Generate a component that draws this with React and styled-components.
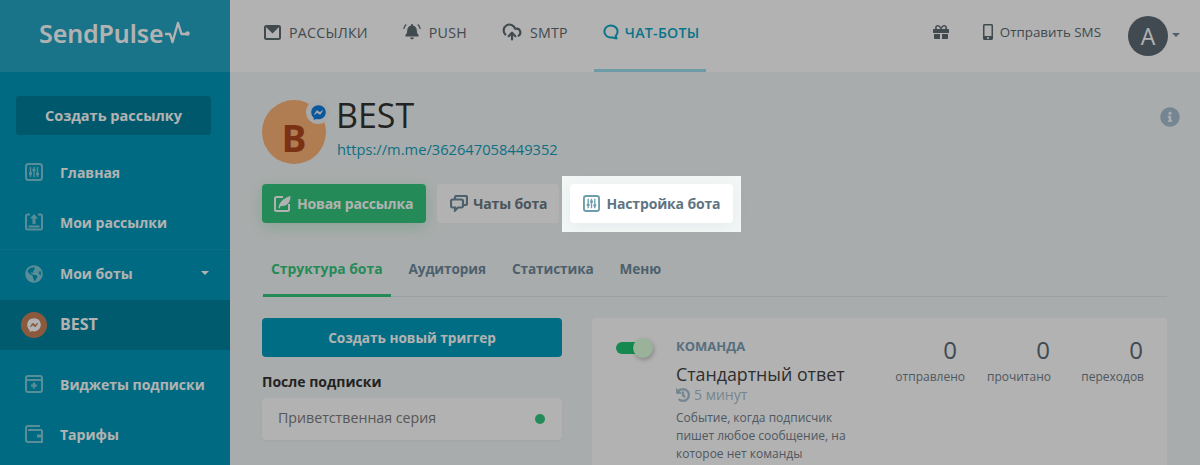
import React from 'react';
import styled, { createGlobalStyle } from 'styled-components';
import { FaGift, FaMobileAlt, FaInfoCircle, FaHistory, FaFacebookMessenger, FaGlobeAmericas } from 'react-icons/fa';
import { LuCloudUpload } from 'react-icons/lu';

const Global = createGlobalStyle`
  html, body { margin: 0; padding: 0; height: 465px; overflow: hidden; background: #f3f7f6; }
  body { font-family: "Open Sans", "Noto Sans", sans-serif; color: #333; }
  * { box-sizing: border-box; }
`;

const Page = styled.div`display: flex; width: 1200px; height: 465px; overflow: hidden;`;
const Overlay = styled.div`position: fixed; inset: 0; background: rgba(0,0,0,.3); z-index: 5;`;

const Sidebar = styled.aside`width: 230px; flex: none; background: #0099ba; color: #fff;`;
const LogoBar = styled.div`height: 72px; background: #25a6c4; display: flex; align-items: center; padding: 0 0 6px 39px; gap: 2px;`;
const LogoText = styled.span`font: 600 25px/1 "Noto Sans", sans-serif; letter-spacing: -.1px; color: #fff;`;
const CreateBtn = styled.button`display: block; width: 195px; height: 39px; margin: 24px 0 0 16px; background: #007f9b; border: 0; border-radius: 3px; color: #fff; font: 700 14.5px "Open Sans", sans-serif;`;
const Nav = styled.nav`margin-top: 13px; display: flex; flex-direction: column;`;
const NavItem = styled.div`
  height: ${p => p.$line ? '51px' : '50px'}; display: flex; align-items: center; gap: 17px; padding-left: ${p => p.$avatar ? '21px' : '25px'};
  font-weight: 700; font-size: 14px; position: relative;
  background: ${p => p.$active ? '#0083a0' : 'transparent'};
  border-top: ${p => p.$line ? '1px solid rgba(255,255,255,.06)' : '0'};
  padding-bottom: ${p => p.$avatar ? '0' : p.$line ? '3px' : '2px'};
  margin-top: ${p => p.$line ? 1 : p.$gap || 0}px;
  & > svg { flex: none; opacity: .5; }
`;
const NavLabel = styled.span``;
const BestLabel = styled.span`margin: -2px 0 0 -4px; font-size: 16px;`;
const Caret = styled.span`
  position: absolute; right: 21px; top: 21px; width: 0; height: 0;
  border-left: 4px solid transparent; border-right: 4px solid transparent; border-top: 4px solid #fff;
`;
const BotAvatar = styled.div`width: 26px; height: 26px; border-radius: 50%; background: #c8815a; color: #fff; flex: none; display: flex; align-items: center; justify-content: center;`;

const Main = styled.div`flex: 1; min-width: 0; display: flex; flex-direction: column;`;
const Top = styled.header`height: 72px; flex: none; background: #fff; display: flex; align-items: stretch; padding: 0 20px 0 34px;`;
const TopNav = styled.nav`display: flex; gap: 35px; flex: 1;`;
const TopLink = styled.a`
  display: flex; align-items: center; gap: ${p => p.$active ? 6 : 8}px; height: 72px; padding-bottom: 8px; position: relative;
  font-size: 14.2px; font-weight: 500; letter-spacing: .25px; color: ${p => p.$active ? '#0ea8c6' : '#5d6a72'};
  svg { flex: none; }
  ${p => p.$active && `
    font-weight: 600;
    &::after { content: ''; position: absolute; left: -9px; right: -7px; bottom: 0; height: 3px; background: #9ee0ee; }
  `}
`;
const TopRight = styled.div`display: flex; align-items: center; padding-bottom: 8px;`;
const Sms = styled.span`display: flex; align-items: center; gap: 4px; margin-left: 31px; font-size: 13.4px; color: #5d6a72;`;
const UserCircle = styled.div`width: 40px; height: 40px; border-radius: 50%; background: #5d6b74; color: #fff; display: flex; align-items: center; justify-content: center; font-size: 23px; margin-left: 27px; position: relative; top: 4px;`;
const UserCaret = styled.span`width: 0; height: 0; margin: 6px 0 0 4px; border-left: 4px solid transparent; border-right: 4px solid transparent; border-top: 4px solid #6f8a99;`;

const Content = styled.main`flex: 1; padding: 28px 33px 0 32px; min-height: 0;`;
const Profile = styled.div`display: flex; gap: 11px; height: 64px;`;
const AvatarWrap = styled.div`position: relative; width: 64px; height: 64px; flex: none;`;
const Avatar = styled.div`width: 64px; height: 64px; border-radius: 50%; background: #fdb274; color: #b0471c; display: flex; align-items: center; justify-content: center; font: 700 37px "Noto Sans", sans-serif; padding-top: 10px;`;
const Badge = styled.div`position: absolute; left: 44px; top: 0; width: 24px; height: 24px; border-radius: 50%; background: #eef1f4; display: flex; align-items: center; justify-content: center; color: #0d7de0;`;
const ProfileText = styled.div`flex: 1;`;
const Title = styled.h1`margin: -1px 0 0 -1px; font: 400 34px/32px "Open Sans", sans-serif; color: #333; height: 35px;`;
const Link = styled.a`display: block; margin-top: 5px; font-size: 14.7px; line-height: 20px; color: #12a0bd;`;
const Info = styled.div`color: #a6c0d3; margin: 7px -13px 0 0; line-height: 0;`;
const Buttons = styled.div`display: flex; gap: 11px; margin-top: 20px; height: 39px;`;
const Btn = styled.button`
  height: 39px; padding: 0 ${p => p.$pr || 13}px 0 ${p => p.$pl || 13}px; border: 0; border-radius: 4px; display: flex; align-items: center; gap: ${p => p.$gap || 6}px;
  font: 700 14px "Open Sans", sans-serif; letter-spacing: -.15px;
  background: ${p => p.$bg}; color: ${p => p.$color};
  ${p => p.$shadow && `box-shadow: 0 4px 16px ${p.$shadow};`}
  svg { flex: none; }
`;
const HaloWrap = styled.div`
  position: relative; z-index: 6; background: #f3f7f6; padding: 8px; margin: -8px; display: flex; height: 56px;
`;
const Tabs = styled.div`display: flex; gap: 10px; margin-top: 26px; height: 48px; padding: 0 9px 0 1px; border-bottom: 1px solid #dfe5e8;`;
const Tab = styled.div`
  padding: 10px 8px 0; height: 48px; font-weight: 700;
  font-size: ${p => p.$active ? '13.9px' : '13.6px'};
  letter-spacing: ${p => p.$active ? '0' : '-.1px'};
  color: ${p => p.$active ? '#34c77e' : '#6f8a9c'};
  ${p => p.$active && 'border-bottom: 3px solid #34c77e;'}
`;
const Columns = styled.div`display: grid; grid-template-columns: 300px 575px; gap: 30px; margin-top: 21px;`;
const LeftCol = styled.div``;
const Primary = styled.button`width: 100%; height: 39px; background: #009dbd; border: 0; border-radius: 4px; color: #fff; font: 700 13.6px "Open Sans", sans-serif;`;
const GroupLabel = styled.div`margin-top: 15px; font-size: 14px; font-weight: 700; line-height: 19px; color: #333;`;
const Row = styled.div`margin-top: 7px; height: 42px; background: #fff; border-radius: 4px; display: flex; align-items: center; justify-content: space-between; padding: 0 17px 4px 16px; font-size: 14.2px; color: #7d7d7d; box-shadow: 0 1px 3px rgba(0,0,0,.05);`;
const Dot = styled.span`width: 10px; height: 10px; border-radius: 50%; background: #34c77e; margin-top: 4px;`;
const GroupNext = styled.div`margin-top: 20px; font-size: 14px; font-weight: 700; color: #333;`;

const Card = styled.section`background: #fff; border-radius: 4px 4px 0 0; height: 160px; display: flex; padding: 20px 23px 0 24px;`;
const Toggle = styled.div`position: relative; width: 37px; height: 20px; flex: none;`;
const Track = styled.div`position: absolute; left: 0; top: 4px; width: 30px; height: 12px; border-radius: 6px; background: #20c475;`;
const Knob = styled.div`position: absolute; right: 0; top: 0; width: 20px; height: 20px; border-radius: 50%; background: #dcffdc; box-shadow: 1px 2px 4px rgba(0,0,0,.25);`;
const CardBody = styled.div`width: 190px; margin-left: 23px; flex: none;`;
const Kind = styled.div`font-size: 13px; font-weight: 700; line-height: 16px; color: #7da0b5;`;
const CardTitle = styled.div`margin-top: 9px; font-size: 17.8px; line-height: 22px; color: #444;`;
const Time = styled.div`display: flex; align-items: center; gap: 4px; margin-top: 1px; font-size: 14px; line-height: 18px; color: #a7bfce; svg { stroke: currentColor; stroke-width: 24px; }`;
const Desc = styled.div`margin-top: 5px; font-size: 12px; line-height: 18px; color: #72808a; width: 190px; white-space: nowrap;`;
const Stats = styled.div`margin-left: auto; display: flex; gap: 30px;`;
const Stat = styled.div`width: 63px; display: flex; flex-direction: column; align-items: flex-end; margin-top: -3px;`;
const StatNum = styled.div`padding-right: 1px; font-size: 24px; line-height: 30px; color: #5d6b74;`;
const StatLabel = styled.div`margin: 3px ${p => p.$over || 0}px 0 0; font-size: 12px; line-height: 18px; color: #72808a; white-space: nowrap;`;

const Sliders = ({ size = 18, color = 'currentColor' }) => (
  <svg width={size} height={size} viewBox="0 0 18 18" fill="none">
    <rect x="1" y="1" width="16" height="16" rx="2.500" stroke={color} strokeWidth="2" />
    <path d="M5.500 4v10M9 4v10M12.500 4v10" stroke={color} strokeWidth="1.400" />
    <path d="M4 10.500h3M7.500 7h3M11 11h3" stroke={color} strokeWidth="2.400" />
  </svg>
);
const Upload = () => (
  <svg width="18" height="18" viewBox="0 0 18 18" fill="none">
    <path d="M5 1.500H2.500a1.500 1.500 0 0 0-1.500 1.500v12a1.500 1.500 0 0 0 1.500 1.500h13a1.500 1.500 0 0 0 1.500-1.500V3a1.500 1.500 0 0 0-1.500-1.500H13" stroke="#fff" strokeWidth="2" />
    <path d="M9 1l4 4.500H10.500V11h-3V5.500H5z" fill="#fff" />
    <path d="M3.500 13.500h11" stroke="#fff" strokeWidth="2" />
  </svg>
);
const Widget = () => (
  <svg width="18" height="18" viewBox="0 0 18 18" fill="none">
    <rect x="1" y="1" width="16" height="16" rx="2" stroke="#fff" strokeWidth="2" />
    <path d="M1 5h16" stroke="#fff" strokeWidth="2" />
    <path d="M9 7.500v6M6 10.500h6" stroke="#fff" strokeWidth="2.200" />
  </svg>
);
const Wallet = () => (
  <svg width="18" height="18" viewBox="0 0 18 18" fill="none">
    <path d="M17 5H3M2 1h13M1 3v12a2 2 0 0 0 2 2h14V5M1 3a2 2 0 0 1 2-2" stroke="#fff" strokeWidth="2" />
    <rect x="12" y="9.500" width="5" height="3" fill="#fff" />
  </svg>
);
const Mail = () => (
  <svg width="17" height="15" viewBox="0 0 17 15" fill="none">
    <rect x="1" y="1" width="15" height="13" rx="1.500" stroke="#5d6a72" strokeWidth="2" />
    <path d="M2 2h13L8.500 8.500z" fill="#5d6a72" />
  </svg>
);
const Bot = () => (
  <svg width="16" height="16" viewBox="0 0 16 16" fill="none">
    <path d="M9.500 13.500c-.5 0-1 .1-1.500.1C4.300 13.600 1.400 11 1.400 7.500S4.300 1.400 8 1.400s6.600 2.700 6.600 6.100c0 1.800-.8 3.300-2 4.400l1 2.500z" stroke="#0ea8c6" strokeWidth="2" strokeLinejoin="round" />
  </svg>
);
const RingBell = () => (
  <svg width="18" height="18" viewBox="0 0 18 18">
    <g transform="translate(2.300 1) scale(.03)">
      <path fill="#5d6a72" d="M224 512c35.320 0 63.970-28.650 63.970-64H160.030c0 35.350 28.650 64 63.970 64zm215.390-149.710c-19.320-20.760-55.470-51.990-55.470-154.290 0-77.700-54.480-139.900-127.940-155.160V32c0-17.670-14.320-32-31.980-32s-31.980 14.330-31.980 32v20.840C118.560 68.100 64.080 130.300 64.080 208c0 102.300-36.150 133.530-55.470 154.290-6 6.450-8.660 14.160-8.610 21.710.11 16.400 12.980 32 32.100 32h383.800c19.120 0 32-15.600 32.100-32 .05-7.550-2.610-15.270-8.610-21.710z" />
    </g>
    <path d="M3.200 1.500A7 7 0 0 0 .8 6M14.800 1.500A7 7 0 0 1 17.200 6" stroke="#5d6a72" strokeWidth="1.300" fill="none" />
  </svg>
);
const Pencil = () => (
  <svg width="17" height="17" viewBox="0 0 17 17" fill="none">
    <path d="M15 9v5.500A1.500 1.500 0 0 1 13.500 16h-11A1.500 1.500 0 0 1 1 14.500v-11A1.500 1.500 0 0 1 2.500 2H9" stroke="#fff" strokeWidth="2" />
    <path d="M4.500 13C5 8 8.500 3.500 16.500 1c0 5-2 9.500-8 10l-2 .2L5.500 13.500z" fill="#fff" />
  </svg>
);
const Chats = () => (
  <svg width="18" height="17" viewBox="0 0 18 17" fill="none">
    <path d="M5 4V2.500A1.500 1.500 0 0 1 6.500 1h9A1.500 1.500 0 0 1 17 2.500v6a1.500 1.500 0 0 1-1.500 1.500H14" stroke="#6f8a9c" strokeWidth="2.200" />
    <path d="M2.500 4.500h9A1.500 1.500 0 0 1 13 6v5a1.500 1.500 0 0 1-1.500 1.500H8L5 15.500v-3H2.500A1.500 1.500 0 0 1 1 11V6a1.500 1.500 0 0 1 1.500-1.500z" stroke="#6f8a9c" strokeWidth="2.200" />
  </svg>
);
const Pulse = () => (
  <svg width="25" height="24" viewBox="0 0 25 24" fill="none">
    <path d="M0 13h5l2.500 8L13 2l3.500 11h5" stroke="#fff" strokeWidth="2.400" strokeLinejoin="round" strokeLinecap="round" />
    <circle cx="22.500" cy="12.500" r="2.200" fill="#fff" />
  </svg>
);

export default function App() {
  return (
    <Page>
      <Global />
      <Sidebar>
        <LogoBar><LogoText>SendPulse</LogoText><Pulse /></LogoBar>
        <CreateBtn>Создать рассылку</CreateBtn>
        <Nav>
          <NavItem><Sliders color="#fff" /><NavLabel>Главная</NavLabel></NavItem>
          <NavItem><Upload /><NavLabel>Мои рассылки</NavLabel></NavItem>
          <NavItem $line><FaGlobeAmericas size={18} /><NavLabel>Мои боты</NavLabel><Caret /></NavItem>
          <NavItem $active $avatar><BotAvatar><FaFacebookMessenger size={14} /></BotAvatar><BestLabel>BEST</BestLabel></NavItem>
          <NavItem $gap={10}><Widget /><NavLabel>Виджеты подписки</NavLabel></NavItem>
          <NavItem><Wallet /><NavLabel>Тарифы</NavLabel></NavItem>
        </Nav>
      </Sidebar>
      <Main>
        <Top>
          <TopNav>
            <TopLink><Mail />РАССЫЛКИ</TopLink>
            <TopLink><RingBell />PUSH</TopLink>
            <TopLink><LuCloudUpload size={20} strokeWidth={2.6} />SMTP</TopLink>
            <TopLink $active><Bot />ЧАТ-БОТЫ</TopLink>
          </TopNav>
          <TopRight>
            <FaGift size={16} color="#5d6a72" />
            <Sms><FaMobileAlt size={16} />Отправить SMS</Sms>
            <UserCircle>A</UserCircle>
            <UserCaret />
          </TopRight>
        </Top>
        <Content>
          <Profile>
            <AvatarWrap>
              <Avatar>B</Avatar>
              <Badge><FaFacebookMessenger size={15} /></Badge>
            </AvatarWrap>
            <ProfileText>
              <Title>BEST</Title>
              <Link>https://m.me/362647058449352</Link>
            </ProfileText>
            <Info><FaInfoCircle size={20} /></Info>
          </Profile>
          <Buttons>
            <Btn $pl={12} $bg="#34c77e" $color="#fff" $shadow="rgba(52,199,126,.25)"><Pencil />Новая рассылка</Btn>
            <Btn $gap={5} $pr={12} $bg="#fff" $color="#6b7a85"><Chats />Чаты бота</Btn>
            <HaloWrap>
              <Btn $bg="#fff" $color="#5f7482" $shadow="rgba(120,150,170,.12)"><Sliders size={17} color="#6e9cac" />Настройка бота</Btn>
            </HaloWrap>
          </Buttons>
          <Tabs>
            <Tab $active>Структура бота</Tab>
            <Tab>Аудитория</Tab>
            <Tab>Статистика</Tab>
            <Tab>Меню</Tab>
          </Tabs>
          <Columns>
            <LeftCol>
              <Primary>Создать новый триггер</Primary>
              <GroupLabel>После подписки</GroupLabel>
              <Row>Приветственная серия<Dot /></Row>
              <GroupNext>Команды</GroupNext>
            </LeftCol>
            <Card>
              <Toggle><Track /><Knob /></Toggle>
              <CardBody>
                <Kind>КОМАНДА</Kind>
                <CardTitle>Стандартный ответ</CardTitle>
                <Time><FaHistory size={14} />5 минут</Time>
                <Desc>Событие, когда подписчик<br />пишет любое сообщение, на<br />которое нет команды</Desc>
              </CardBody>
              <Stats>
                <Stat><StatNum>0</StatNum><StatLabel $over={-7}>отправлено</StatLabel></Stat>
                <Stat><StatNum>0</StatNum><StatLabel>прочитано</StatLabel></Stat>
                <Stat><StatNum>0</StatNum><StatLabel>переходов</StatLabel></Stat>
              </Stats>
            </Card>
          </Columns>
        </Content>
      </Main>
      <Overlay />
    </Page>
  );
}
